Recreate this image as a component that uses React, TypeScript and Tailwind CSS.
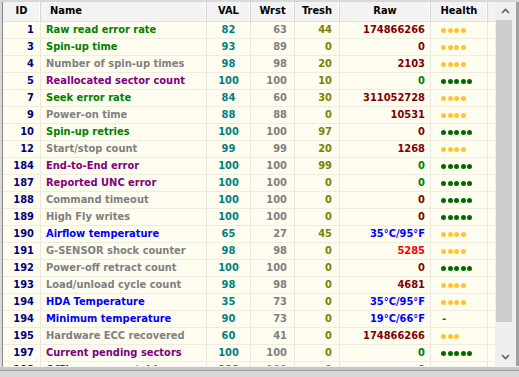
type Row = {
  id: number;
  name: string;
  nc: string;
  val: number;
  wrst: number;
  tresh: number;
  raw: string;
  rc: string;
  health: 'g5' | 'o4' | 'o3' | 'dash';
};

const GREEN = 'text-[#008000]';
const GREY = 'text-[#808080]';
const PURPLE = 'text-[#800080]';
const BLUE = 'text-[#0000ff]';
const DRED = 'text-[#800000]';
const RED = 'text-[#ff0000]';

const rows: Row[] = [
  { id: 1, name: 'Raw read error rate', nc: GREEN, val: 82, wrst: 63, tresh: 44, raw: '174866266', rc: DRED, health: 'o4' },
  { id: 3, name: 'Spin-up time', nc: GREEN, val: 93, wrst: 89, tresh: 0, raw: '0', rc: DRED, health: 'o4' },
  { id: 4, name: 'Number of spin-up times', nc: GREY, val: 98, wrst: 98, tresh: 20, raw: '2103', rc: DRED, health: 'o4' },
  { id: 5, name: 'Reallocated sector count', nc: PURPLE, val: 100, wrst: 100, tresh: 10, raw: '0', rc: GREEN, health: 'g5' },
  { id: 7, name: 'Seek error rate', nc: GREEN, val: 84, wrst: 60, tresh: 30, raw: '311052728', rc: DRED, health: 'o4' },
  { id: 9, name: 'Power-on time', nc: GREY, val: 88, wrst: 88, tresh: 0, raw: '10531', rc: DRED, health: 'o4' },
  { id: 10, name: 'Spin-up retries', nc: GREEN, val: 100, wrst: 100, tresh: 97, raw: '0', rc: DRED, health: 'g5' },
  { id: 12, name: 'Start/stop count', nc: GREY, val: 99, wrst: 99, tresh: 20, raw: '1268', rc: DRED, health: 'o4' },
  { id: 184, name: 'End-to-End error', nc: PURPLE, val: 100, wrst: 100, tresh: 99, raw: '0', rc: GREEN, health: 'g5' },
  { id: 187, name: 'Reported UNC error', nc: PURPLE, val: 100, wrst: 100, tresh: 0, raw: '0', rc: GREEN, health: 'g5' },
  { id: 188, name: 'Command timeout', nc: GREY, val: 100, wrst: 100, tresh: 0, raw: '0', rc: DRED, health: 'g5' },
  { id: 189, name: 'High Fly writes', nc: GREY, val: 100, wrst: 100, tresh: 0, raw: '0', rc: DRED, health: 'g5' },
  { id: 190, name: 'Airflow temperature', nc: BLUE, val: 65, wrst: 27, tresh: 45, raw: '35°C/95°F', rc: BLUE, health: 'o4' },
  { id: 191, name: 'G-SENSOR shock counter', nc: GREY, val: 98, wrst: 98, tresh: 0, raw: '5285', rc: RED, health: 'o4' },
  { id: 192, name: 'Power-off retract count', nc: GREY, val: 100, wrst: 100, tresh: 0, raw: '0', rc: DRED, health: 'g5' },
  { id: 193, name: 'Load/unload cycle count', nc: GREY, val: 98, wrst: 98, tresh: 0, raw: '4681', rc: DRED, health: 'o4' },
  { id: 194, name: 'HDA Temperature', nc: BLUE, val: 35, wrst: 73, tresh: 0, raw: '35°C/95°F', rc: BLUE, health: 'o4' },
  { id: 194, name: 'Minimum temperature', nc: BLUE, val: 90, wrst: 73, tresh: 0, raw: '19°C/66°F', rc: BLUE, health: 'dash' },
  { id: 195, name: 'Hardware ECC recovered', nc: GREY, val: 60, wrst: 41, tresh: 0, raw: '174866266', rc: DRED, health: 'o3' },
  { id: 197, name: 'Current pending sectors', nc: PURPLE, val: 100, wrst: 100, tresh: 0, raw: '0', rc: GREEN, health: 'g5' },
  { id: 198, name: 'Offline uncorrectable', nc: PURPLE, val: 100, wrst: 100, tresh: 0, raw: '0', rc: GREEN, health: 'g5' },
];

const COLS = 'grid grid-cols-[38px_166px_44px_44px_45px_91px_57px_7px]';

function Dots({ kind }: { kind: Row['health'] }) {
  if (kind === 'dash') return <span className="text-[#008000] pl-[1px]">-</span>;
  const n = kind === 'g5' ? 5 : kind === 'o4' ? 4 : 3;
  const color = kind === 'g5' ? 'bg-[#006800]' : 'bg-[#ffc433]';
  return (
    <div className="flex gap-[1.5px] items-center">
      {Array.from({ length: n }).map((_, i) => (
        <div key={i} className={`w-[5px] h-[5px] rounded-full ${color}`} />
      ))}
    </div>
  );
}

function HeadCell({ children, left }: { children?: React.ReactNode; left?: boolean }) {
  return (
    <div
      className={`flex items-center h-full border-r border-[#d6d6d6] shadow-[inset_-1px_0_0_#ffffff] ${
        left ? 'justify-start pl-[9px]' : 'justify-center'
      }`}
    >
      {children}
    </div>
  );
}

export default function App() {
  return (
    <div
      className="w-[519px] h-[377px] bg-[#d8d8d8] overflow-hidden text-[11px] font-bold pt-[2px]"
      style={{ fontFamily: '"DejaVu Sans Condensed", Tahoma, "DejaVu Sans", sans-serif' }}
    >
      <div className="flex h-[365px] ml-[2px] border-l border-[#888888] border-b border-b-[#f4f4f4]">
        {/* grid */}
        <div className="w-[492px] h-full overflow-hidden bg-[#fffdf0]">
          <div className={`${COLS} h-[20px] bg-[#f3f3f3] border-b border-[#e2e2e2] text-black`}>
            <HeadCell>ID</HeadCell>
            <HeadCell left>Name</HeadCell>
            <HeadCell>VAL</HeadCell>
            <HeadCell>Wrst</HeadCell>
            <HeadCell>Tresh</HeadCell>
            <HeadCell>Raw</HeadCell>
            <HeadCell>Health</HeadCell>
            <div className="h-full" />
          </div>
          {rows.map((r, i) => (
            <div key={i} className={`${COLS} h-[17px] border-b border-[#efece0]`}>
              <div className="flex items-center justify-end pr-[6px] border-r border-[#ece9dc] text-[#000080]">
                {r.id}
              </div>
              <div className={`flex items-center pl-[5px] border-r border-[#ece9dc] whitespace-nowrap overflow-hidden ${r.nc}`}>
                {r.name}
              </div>
              <div className="flex items-center justify-center border-r border-[#ece9dc] text-[#008080]">
                {r.val}
              </div>
              <div className="flex items-center justify-end pr-[7px] border-r border-[#ece9dc] text-[#808080]">
                {r.wrst}
              </div>
              <div className="flex items-center justify-end pr-[7px] border-r border-[#ece9dc] text-[#808000]">
                {r.tresh}
              </div>
              <div className={`flex items-center justify-end pr-[5px] border-r border-[#ece9dc] ${r.rc}`}>
                {r.raw}
              </div>
              <div className="flex items-center pl-[10px] border-r border-[#ece9dc]">
                <Dots kind={r.health} />
              </div>
              <div />
            </div>
          ))}
        </div>
        {/* scrollbar */}
        <div className="w-[21px] h-full flex flex-col bg-[#efefef]">
          <div className="h-[18px] flex items-center justify-center">
            <svg width="9" height="6" viewBox="0 0 9 6">
              <path d="M1 5 L4.5 1.5 L8 5" fill="none" stroke="#606060" strokeWidth="1.6" />
            </svg>
          </div>
          <div className="h-[302px] ml-[1px] mr-[4px] bg-[#cdcdcd]" />
          <div className="flex-1" />
          <div className="h-[18px] flex items-center justify-center">
            <svg width="9" height="6" viewBox="0 0 9 6">
              <path d="M1 1 L4.5 4.5 L8 1" fill="none" stroke="#606060" strokeWidth="1.6" />
            </svg>
          </div>
        </div>
        <div className="w-[3px] h-full bg-[#a0a0a0]" />
      </div>
      <div className="h-[4px] bg-[#c8c8c8] border-b border-[#9a9a9a]" />
    </div>
  );
}
